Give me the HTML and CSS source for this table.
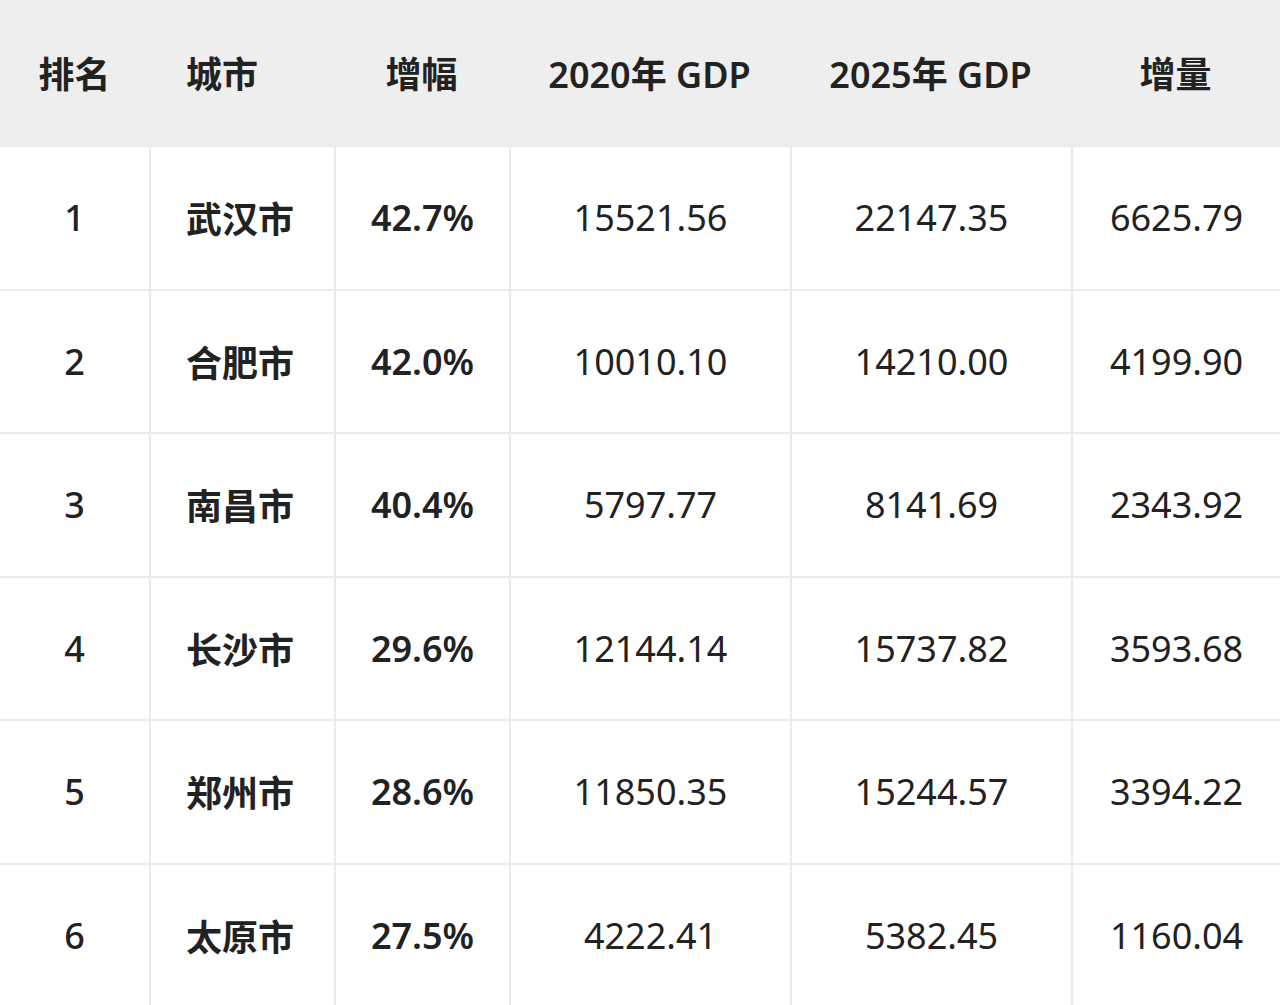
FILE: index.html
```html
<!DOCTYPE html>
<html lang="zh-CN">
<head>
<meta charset="utf-8">
<title>GDP 增幅排名</title>
<link rel="stylesheet" href="styles.css">
</head>
<body>
<div class="table">
  <div class="row head">
    <div class="cell">排名</div>
    <div class="cell city">城市</div>
    <div class="cell">增幅</div>
    <div class="cell">2020年 GDP</div>
    <div class="cell">2025年 GDP</div>
    <div class="cell">增量</div>
  </div>
  <div class="row">
    <div class="cell rank">1</div>
    <div class="cell city b">武汉市</div>
    <div class="cell b">42.7%</div>
    <div class="cell">15521.56</div>
    <div class="cell">22147.35</div>
    <div class="cell">6625.79</div>
  </div>
  <div class="row">
    <div class="cell rank">2</div>
    <div class="cell city b">合肥市</div>
    <div class="cell b">42.0%</div>
    <div class="cell">10010.10</div>
    <div class="cell">14210.00</div>
    <div class="cell">4199.90</div>
  </div>
  <div class="row">
    <div class="cell rank">3</div>
    <div class="cell city b">南昌市</div>
    <div class="cell b">40.4%</div>
    <div class="cell">5797.77</div>
    <div class="cell">8141.69</div>
    <div class="cell">2343.92</div>
  </div>
  <div class="row">
    <div class="cell rank">4</div>
    <div class="cell city b">长沙市</div>
    <div class="cell b">29.6%</div>
    <div class="cell">12144.14</div>
    <div class="cell">15737.82</div>
    <div class="cell">3593.68</div>
  </div>
  <div class="row">
    <div class="cell rank">5</div>
    <div class="cell city b">郑州市</div>
    <div class="cell b">28.6%</div>
    <div class="cell">11850.35</div>
    <div class="cell">15244.57</div>
    <div class="cell">3394.22</div>
  </div>
  <div class="row">
    <div class="cell rank">6</div>
    <div class="cell city b">太原市</div>
    <div class="cell b">27.5%</div>
    <div class="cell">4222.41</div>
    <div class="cell">5382.45</div>
    <div class="cell">1160.04</div>
  </div>
</div>
</body>
</html>
```
FILE: styles.css
```css
* { box-sizing: border-box; }
html, body {
  margin: 0;
  padding: 0;
  background: #ffffff;
  overflow: hidden;
}
body {
  font-family: "Noto Sans", "Noto Sans CJK SC", sans-serif;
  color: #222222;
  font-size: 36px;
}
.table {
  width: 1280px;
  display: flex;
  flex-direction: column;
}
.row {
  display: grid;
  grid-template-columns: 149px 185px 175px 281px 281px 1fr;
  height: 143.5px;
  border-top: 2px solid #ebebeb;
}
.row .cell {
  display: flex;
  align-items: center;
  justify-content: center;
  white-space: nowrap;
}
.row .cell + .cell {
  border-left: 2px solid #ebebeb;
}
.row .cell.city {
  justify-content: flex-start;
  padding-left: 35px;
}
.head {
  height: 145px;
  border-top: none;
  background: #eeeeee;
  font-weight: 600;
}
.head .cell + .cell {
  border-left: none;
}
.head .cell.city {
  padding-left: 37px;
}
.b {
  font-weight: 600;
}
.rank {
  font-weight: 500;
}
```
